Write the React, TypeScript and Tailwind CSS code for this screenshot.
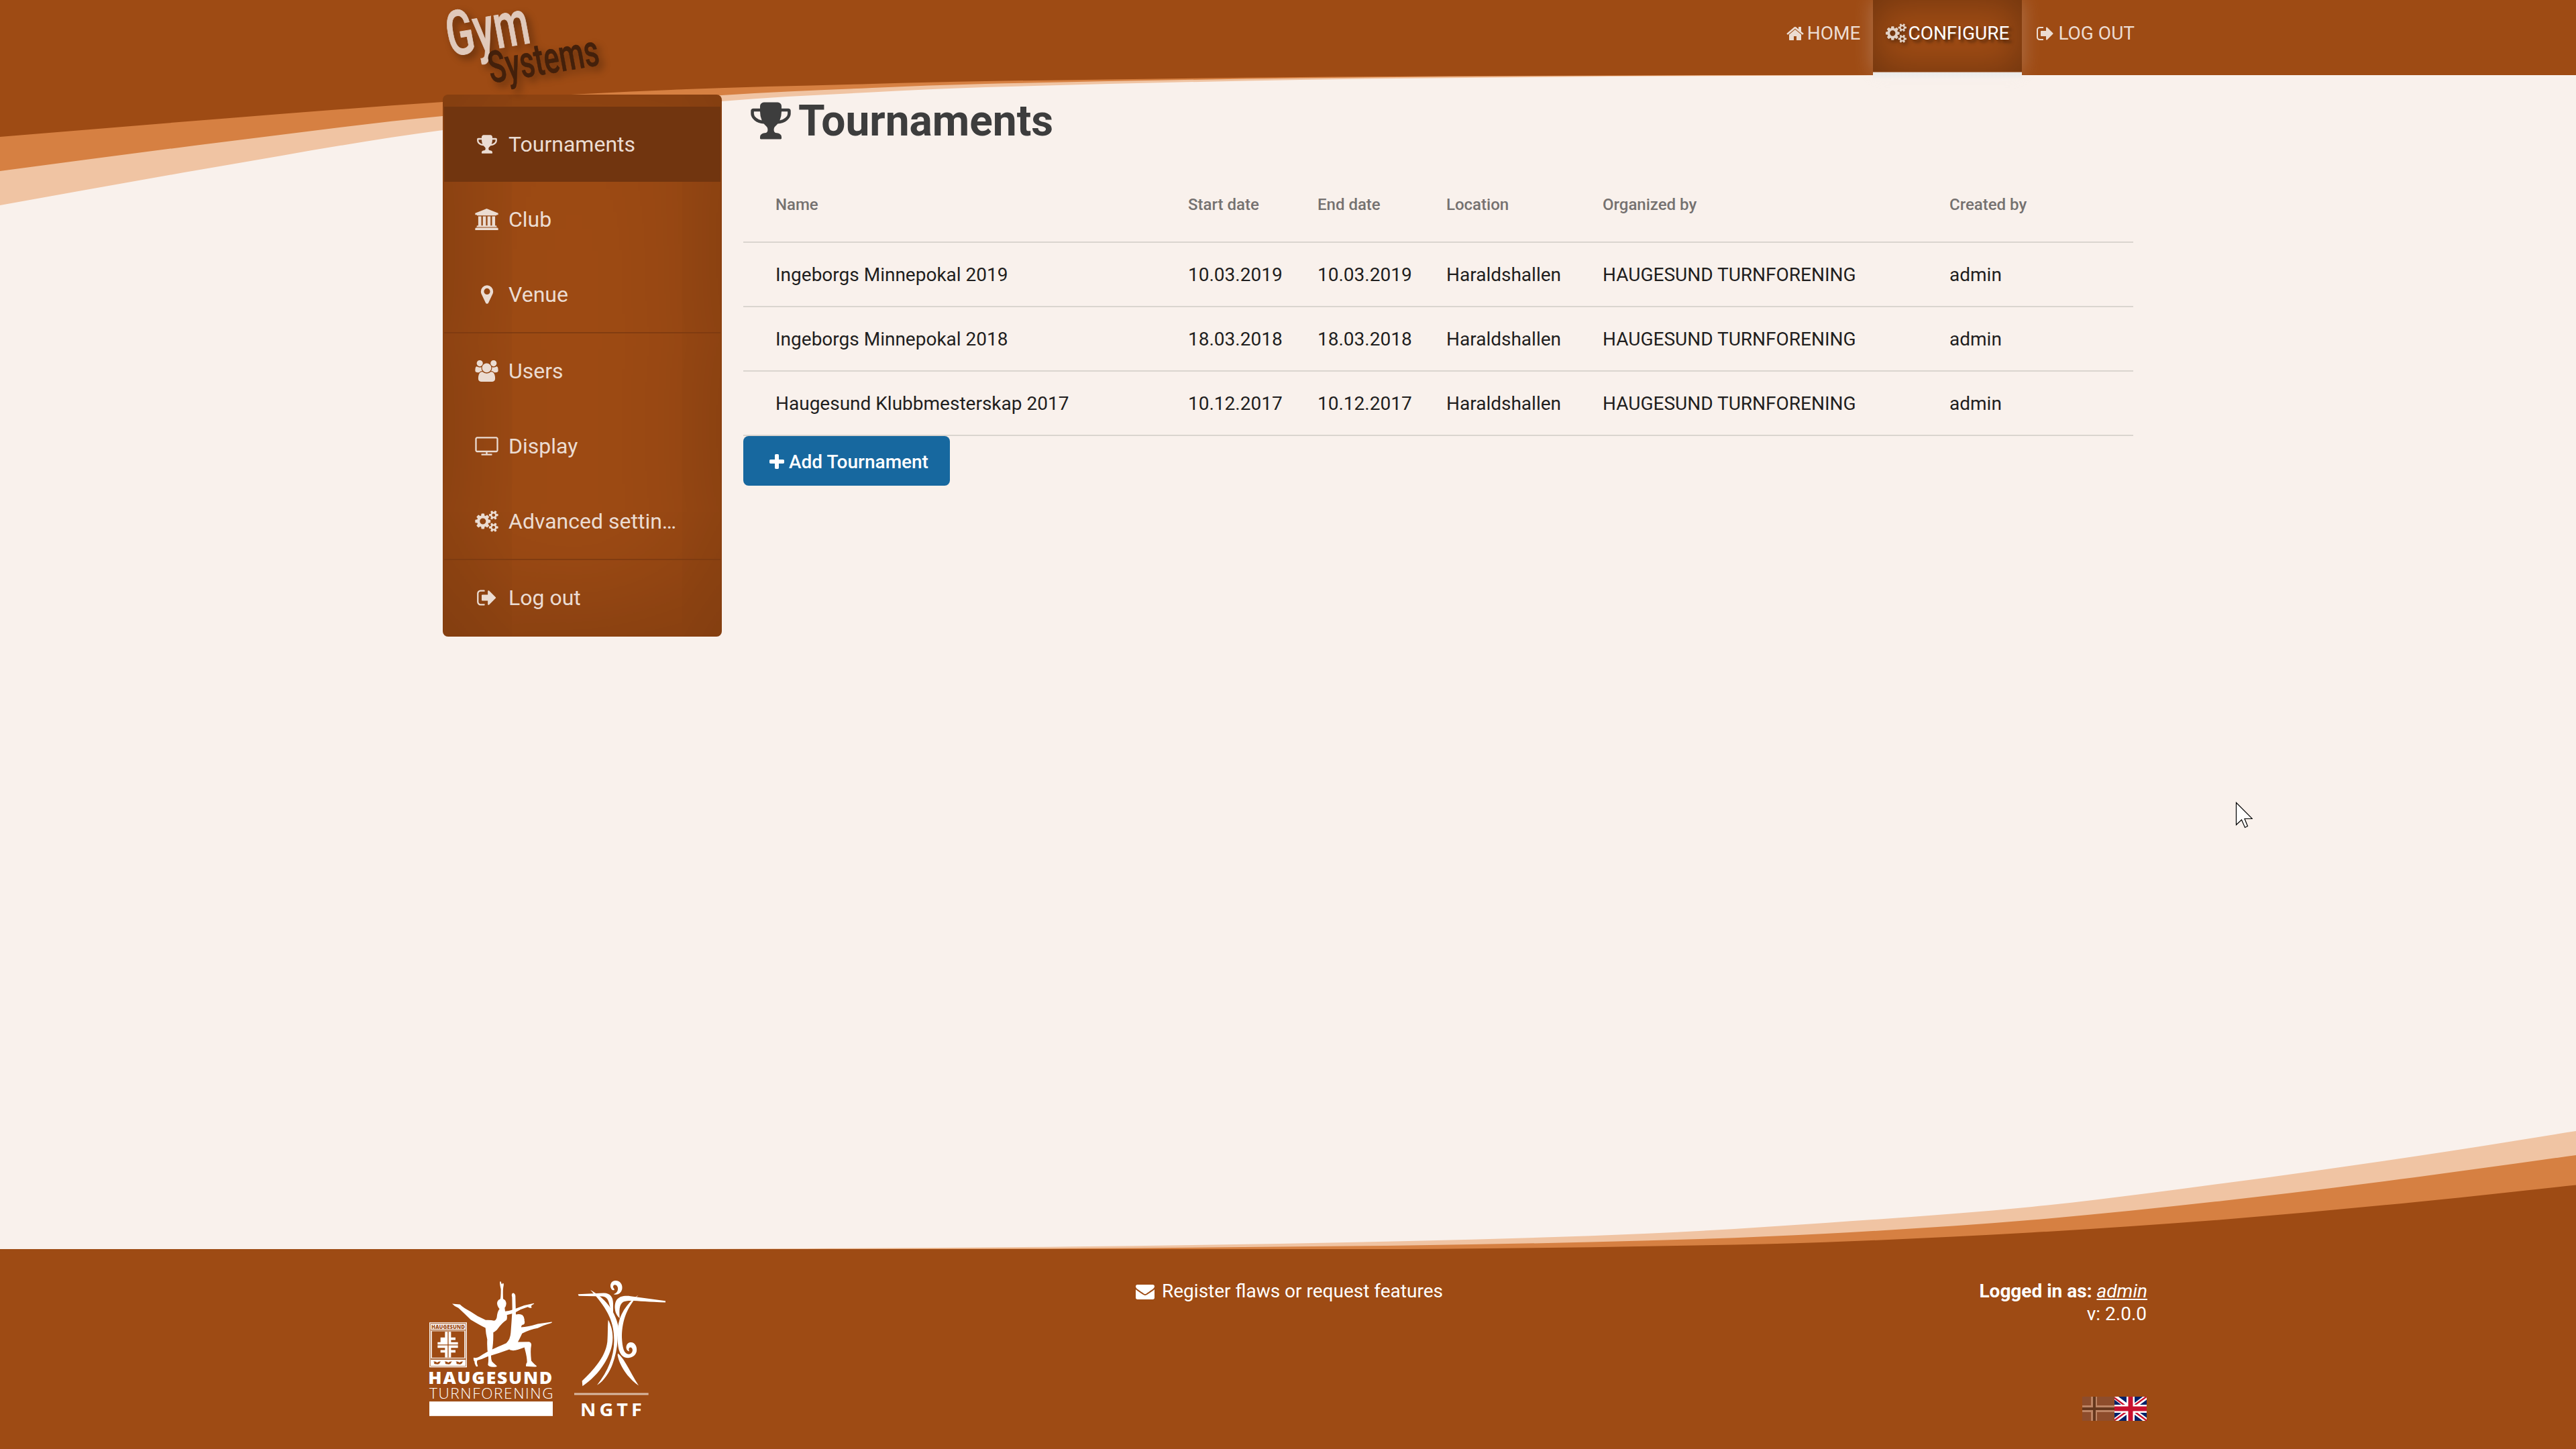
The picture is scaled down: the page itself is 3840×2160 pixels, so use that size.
import React from "react";

type Point = [number, number];

/* Smooth curve through the points; each segment is a Catmull-Rom span. */
function curve(points: Point[]): string {
  let d = "";
  for (let i = 0; i < points.length - 1; i++) {
    const p0 = points[i - 1] ?? points[i];
    const p1 = points[i];
    const p2 = points[i + 1];
    const p3 = points[i + 2] ?? p2;
    const span = p2[0] - p1[0];
    const m1 = (p2[1] - p0[1]) / (p2[0] - p0[0]);
    const m2 = (p3[1] - p1[1]) / (p3[0] - p1[0]);
    d += ` C${p1[0] + span / 3} ${p1[1] + (m1 * span) / 3} ${p2[0] - span / 3} ${p2[1] - (m2 * span) / 3} ${p2[0]} ${p2[1]}`;
  }
  return d;
}

const topWaves: { fill: string; points: Point[] }[] = [
  { fill: "#f0c4a3", points: [[0, 306], [330, 247.5], [660, 194], [1076, 151], [1300, 137.5], [1469, 130], [1939, 119], [2400, 114], [2850, 112]] },
  { fill: "#d68042", points: [[0, 255], [330, 212], [660, 173], [1076, 142], [1300, 131], [1469, 125], [1939, 116.5], [2400, 113], [2800, 112]] },
  { fill: "#9e4b14", points: [[0, 204], [330, 177], [660, 152], [1000, 134], [1300, 125], [1469, 121], [1939, 115], [2400, 112.5], [2600, 112]] },
];

const bottomWaves: { fill: string; points: Point[] }[] = [
  { fill: "#f0c4a3", points: [[1000, 1862], [1600, 1858.3], [2100, 1850], [2457, 1838.7], [2721, 1823], [3029, 1799], [3314, 1764], [3600, 1723.7], [3840, 1686]] },
  { fill: "#d68042", points: [[1200, 1862], [1600, 1861], [2100, 1856.5], [2457, 1849.3], [2721, 1839], [3029, 1818.5], [3314, 1790], [3600, 1755], [3840, 1722]] },
  { fill: "#9e4b14", points: [[1900, 1862], [2143, 1861.7], [2457, 1857.7], [2721, 1851.7], [3029, 1837.3], [3314, 1818], [3600, 1792], [3840, 1766.5]] },
];

const cog =
  "M896 896q0-106-75-181t-181-75-181 75-75 181 75 181 181 75 181-75 75-181zm768 512q0-52-38-90t-90-38-90 38-38 90q0 53 37.5 90.5t90.5 37.5 90.5-37.5 37.5-90.5zm0-1024q0-52-38-90t-90-38-90 38-38 90q0 53 37.5 90.5t90.5 37.5 90.5-37.5 37.5-90.5zm-384 421v185q0 10-7 19.5t-16 10.5l-155 24q-11 35-32 76 34 48 90 115 7 11 7 20 0 12-7 19-23 30-82.5 89.5t-78.5 59.5q-11 0-21-7l-115-90q-37 19-77 31-11 108-23 155-7 24-30 24h-186q-11 0-20-7.5t-10-17.5l-23-153q-34-10-75-31l-118 89q-7 7-20 7-11 0-21-8-144-133-144-160 0-9 7-19 10-14 41-53t47-61q-23-44-35-82l-152-24q-10-1-17-9.5t-7-19.5v-185q0-10 7-19.5t16-10.5l155-24q11-35 32-76-34-48-90-115-7-11-7-20 0-12 7-20 22-30 82-89t79-59q11 0 21 7l115 90q34-18 77-32 11-108 23-154 7-24 30-24h186q11 0 20 7.5t10 17.5l23 153q34 10 75 31l118-89q8-7 20-7 11 0 21 8 144 133 144 160 0 8-7 19-12 16-42 54t-45 60q23 48 34 82l152 23q10 2 17 10.5t7 19.5zm640 533v140q0 16-149 31-12 27-30 52 51 113 51 138 0 4-4 7-122 71-124 71-8 0-46-47t-52-68q-20 2-30 2t-30-2q-14 21-52 68t-46 47q-2 0-124-71-4-3-4-7 0-25 51-138-18-25-30-52-149-15-149-31v-140q0-16 149-31 13-29 30-52-51-113-51-138 0-4 4-7 4-2 35-20t59-34 30-16q8 0 46 46.5t52 67.5q20-2 30-2t30 2q51-71 92-112l6-2q4 0 124 70 4 3 4 7 0 25-51 138 17 23 30 52 149 15 149 31zm0-1024v140q0 16-149 31-12 27-30 52 51 113 51 138 0 4-4 7-122 71-124 71-8 0-46-47t-52-68q-20 2-30 2t-30-2q-14 21-52 68t-46 47q-2 0-124-71-4-3-4-7 0-25 51-138-18-25-30-52-149-15-149-31v-140q0-16 149-31 13-29 30-52-51-113-51-138 0-4 4-7 4-2 35-20t59-34 30-16q8 0 46 46.5t52 67.5q20-2 30-2t30 2q51-71 92-112l6-2q4 0 124 70 4 3 4 7 0 25-51 138 17 23 30 52 149 15 149 31z";

/* Icon outlines on a 1792-unit em; some are wider than the em. */
const icons = {
  trophy: {
    w: 1792,
    d: "M522 883q-74-162-74-371h-256v96q0 78 94.5 162t235.5 113zm1078-275v-96h-256q0 209-74 371 141-29 235.5-113t94.5-162zm128-128v128q0 71-41.5 143t-112 130-173 97.5-215.5 44.5q-42 54-95 95-38 34-52.5 72.5t-14.5 89.5q0 54 30.5 91t97.5 37q75 0 133.5 45.5t58.5 114.5v64q0 14-9 23t-23 9h-832q-14 0-23-9t-9-23v-64q0-69 58.5-114.5t133.5-45.5q67 0 97.5-37t30.5-91q0-51-14.5-89.5t-52.5-72.5q-53-41-95-95-113-5-215.5-44.5t-173-97.5-112-130-41.5-143v-128q0-40 28-68t68-28h288v-96q0-66 47-113t113-47h576q66 0 113 47t47 113v96h288q40 0 68 28t28 68z",
  },
  university: {
    w: 1920,
    d: "M960 0l960 384v128h-128q0 26-20.5 45t-48.5 19H197q-28 0-48.5-19T128 512H0V384zM256 640h256v768h128V640h256v768h128V640h256v768h128V640h256v768h59q28 0 48.5 19t20.5 45v64H128v-64q0-26 20.5-45t48.5-19h59V640zM1851 1600q28 0 48.5 19t20.5 45v128H0v-128q0-26 20.5-45t48.5-19z",
  },
  marker: {
    w: 1792,
    d: "M1152 640q0-106-75-181t-181-75-181 75-75 181 75 181 181 75 181-75 75-181zm256 0q0 109-33 179l-364 774q-16 33-47.5 52t-67.5 19-67.5-19-46.5-52l-365-774q-33-70-33-179 0-212 150-362t362-150 362 150 150 362z",
  },
  users: {
    w: 1920,
    d: "M593 896q-162 5-265 128H194q-82 0-138-40.5T0 865q0-353 124-353 6 0 43.5 21t97.5 42.5T384 597q67 0 133-23-5 37-5 66 0 139 81 256zm1071 637q0 120-73 189.5t-194 69.5H523q-121 0-194-69.5T256 1533q0-53 3.5-103.5t14-109T300 1212t43-97.5 62-81 85.5-53.5T602 960q10 0 43 21.5t73 48 107 48 135 21.5 135-21.5 107-48 73-48 43-21.5q61 0 111.5 20t85.5 53.5 62 81 43 97.5 26.5 108.5 14 109 3.5 103.5zM640 256q0 106-75 181t-181 75-181-75-75-181 75-181T384 0t181 75 75 181zm704 384q0 159-112.5 271.5T960 1024 688.5 911.5 576 640t112.5-271.5T960 256t271.5 112.5T1344 640zm576 225q0 78-56 118.5t-138 40.5h-134q-103-123-265-128 81-117 81-256 0-29-5-66 66 23 133 23 59 0 119-21.5t97.5-42.5 43.5-21q124 0 124 353zm-128-609q0 106-75 181t-181 75-181-75-75-181 75-181 181-75 181 75 75 181z",
  },
  display: {
    w: 1920,
    d: "M1792 1248V288q0-13-9.5-22.5T1760 256H160q-13 0-22.5 9.5T128 288v960q0 13 9.5 22.5t22.5 9.5h1600q13 0 22.5-9.5t9.5-22.5zm128-960v960q0 66-47 113t-113 47h-736v128h352q14 0 23 9t9 23v64q0 14-9 23t-23 9H544q-14 0-23-9t-9-23v-64q0-14 9-23t23-9h352v-128H160q-66 0-113-47T0 1248V288q0-66 47-113t113-47h1600q66 0 113 47t47 113z",
  },
  cogs: { w: 1920, d: cog },
  signOut: {
    w: 1664,
    d: "M640 1440q0 4 1 20t.5 26.5-3 23.5-10 19.5-20.5 6.5h-320q-119 0-203.5-84.5t-84.5-203.5v-704q0-119 84.5-203.5t203.5-84.5h320q13 0 22.5 9.5t9.5 22.5q0 4 1 20t.5 26.5-3 23.5-10 19.5-20.5 6.5h-320q-66 0-113 47t-47 113v704q0 66 47 113t113 47h312l11.5 1 11.5 3 8 5.5 7 9 2 13.5zm928-544q0 26-19 45l-544 544q-19 19-45 19t-45-19-19-45v-288h-448q-26 0-45-19t-19-45v-384q0-26 19-45t45-19h448v-288q0-26 19-45t45-19 45 19l544 544q19 19 19 45z",
  },
  home: {
    w: 1792,
    d: "M1472 992v480q0 26-19 45t-45 19h-384v-384h-256v384h-384q-26 0-45-19t-19-45v-480q0-1 .5-3t.5-3l575-474 575 474q1 2 1 6zm223-69l-62 74q-8 9-21 11h-3q-13 0-21-7l-692-577-692 577q-12 8-24 7-13-2-21-11l-62-74q-8-10-7-23.5t11-21.5l719-599q32-26 76-26t76 26l244 204v-195q0-14 9-23t23-9h192q14 0 23 9t9 23v408l219 182q10 8 11 21.5t-7 23.5z",
  },
  plus: {
    w: 1792,
    d: "M1600 736v192q0 40-28 68t-68 28h-416v416q0 40-28 68t-68 28h-192q-40 0-68-28t-28-68v-416h-416q-40 0-68-28t-28-68v-192q0-40 28-68t68-28h416v-416q0-40 28-68t68-28h192q40 0 68 28t28 68v416h416q40 0 68 28t28 68z",
  },
  envelope: {
    w: 1792,
    d: "M1792 710v794q0 66-47 113t-113 47h-1472q-66 0-113-47t-47-113v-794q44 49 101 87 362 246 497 345 57 42 92.5 65.5t94.5 48 110 24.5h2q51 0 110-24.5t94.5-48 92.5-65.5q170-123 498-345 57-39 100-87zm0-294q0 79-49 151t-122 123q-376 261-468 325-10 7-42.5 31t-54 38.5-52 32.5-57.5 27-50 9h-2q-23 0-50-9t-57.5-27-52-32.5-54-38.5-42.5-31q-91-64-262-182.5t-205-142.5q-62-42-117-115.5t-55-136.5q0-78 41.5-130t118.5-52h1472q65 0 112.5 47t47.5 113z",
  },
};

type IconName = keyof typeof icons;

function Icon({ name, className }: { name: IconName; className: string }) {
  const icon = icons[name];
  return (
    <svg viewBox={`0 0 ${icon.w} 1792`} className={`shrink-0 overflow-visible fill-current ${className}`}>
      <path d={icon.d} />
    </svg>
  );
}

function Waves() {
  return (
    <svg viewBox="0 0 3840 2160" className="absolute inset-0 -z-10 h-[2160px] w-[3840px]">
      {topWaves.map((w) => (
        <path key={w.fill} fill={w.fill} d={`M0 0 L${w.points[0][0]} ${w.points[0][1]}${curve(w.points)} L3840 112 L3840 0Z`} />
      ))}
      {bottomWaves.map((w) => (
        <path key={w.fill} fill={w.fill} d={`M${w.points[0][0]} ${w.points[0][1]}${curve(w.points)} L3840 1870 L${w.points[0][0]} 1870Z`} />
      ))}
    </svg>
  );
}

function Logo() {
  return (
    <svg
      viewBox="650 0 270 150"
      className="h-[150px] w-[270px] shrink-0 overflow-visible font-[Roboto] font-medium [filter:drop-shadow(6px_6px_6px_rgba(0,0,0,0.35))]"
    >
      <g transform="translate(671 84) rotate(-9.5) skewX(1)">
        <text fontSize="93" textLength="124" lengthAdjust="spacingAndGlyphs" fill="#e0c9bb" stroke="#e0c9bb" strokeWidth="1">
          Gym
        </text>
      </g>
      <g transform="translate(732 124) rotate(-9.5) skewX(1)">
        <text fontSize="66" textLength="166" lengthAdjust="spacingAndGlyphs" fill="#43200b" stroke="#43200b" strokeWidth="0.6">
          Systems
        </text>
      </g>
    </svg>
  );
}

function Header() {
  return (
    <header className="flex h-[112px] items-start justify-between pr-[640px] pl-[650px]">
      <Logo />
      <nav className="flex h-[112px] text-[28px] leading-none text-[#ecdcd2]">
        <a className="flex h-[100px] items-center gap-[4px] pr-[19px] pl-[18px]">
          <Icon name="home" className="size-[28px]" />
          HOME
        </a>
        <a className="flex h-[112px] w-[222px] flex-col">
          <span className="flex h-[108px] shrink-0 items-center justify-center gap-[2px] border-b border-[#b98d70] bg-[#9e4b14] pb-[8px] text-white shadow-[inset_0_0_60px_rgba(0,0,0,0.32),0_0_28px_rgba(230,235,240,0.28)] [text-shadow:4px_4px_4px_rgba(0,0,0,0.5)]">
            <Icon name="cogs" className="h-[29px] w-[31px] text-[#e2d2c6] [filter:drop-shadow(3px_3px_3px_rgba(0,0,0,0.4))]" />
            CONFIGURE
          </span>
          <span className="h-[12px] shrink-0 bg-linear-to-b from-[#e9eaea] to-[#f9f1ec]" />
        </a>
        <a className="flex h-[100px] items-center gap-[6px] pr-[18px] pl-[22px]">
          <Icon name="signOut" className="h-[28px] w-[26px]" />
          LOG OUT
        </a>
      </nav>
    </header>
  );
}

const menu: { icon: IconName; iconClass: string; label: string; active?: boolean; divided?: boolean }[] = [
  { icon: "trophy", iconClass: "ml-[1px] size-[32px]", label: "Tournaments", active: true },
  { icon: "university", iconClass: "h-[32px] w-[35px]", label: "Club" },
  { icon: "marker", iconClass: "ml-[1px] size-[32px]", label: "Venue" },
  { icon: "users", iconClass: "ml-[1px] h-[32px] w-[35px]", label: "Users", divided: true },
  { icon: "display", iconClass: "h-[32px] w-[35px]", label: "Display" },
  { icon: "cogs", iconClass: "ml-[1px] h-[32px] w-[35px]", label: "Advanced settin…" },
  { icon: "signOut", iconClass: "ml-[2px] h-[32px] w-[30px]", label: "Log out", divided: true },
];

function Sidebar() {
  return (
    <aside className="h-[808px] w-[416px] shrink-0 rounded-[8px] bg-[#9e4b14] px-[2px] pt-[18px] text-[32px] text-[#ebdcd2] shadow-[inset_0_0_200px_rgba(0,0,0,0.28)]">
      {menu.map((m) => (
        <div key={m.label} className={m.divided ? "border-t-2 border-[#7c3a10]/80" : ""}>
          <a className={`flex h-[112px] items-center pl-[43px] ${m.active ? "bg-[#71350f]" : ""}`}>
            <span className="flex w-[40px] justify-center">
              <Icon name={m.icon} className={m.iconClass} />
            </span>
            <span className="pl-[13px]">{m.label}</span>
          </a>
        </div>
      ))}
    </aside>
  );
}

const rows = [
  ["Ingeborgs Minnepokal 2019", "10.03.2019", "10.03.2019", "Haraldshallen", "HAUGESUND TURNFORENING", "admin"],
  ["Ingeborgs Minnepokal 2018", "18.03.2018", "18.03.2018", "Haraldshallen", "HAUGESUND TURNFORENING", "admin"],
  ["Haugesund Klubbmesterskap 2017", "10.12.2017", "10.12.2017", "Haraldshallen", "HAUGESUND TURNFORENING", "admin"],
];

function Content() {
  return (
    <section className="w-[2072px]">
      <h1 className="flex h-[107px] items-center pb-[29px] pl-[9px] text-[64px] font-bold text-[#3d3d3d]">
        <Icon name="trophy" className="size-[64px]" />
        <span className="pt-[2px] pl-[9px]">Tournaments</span>
      </h1>
      <div className="grid h-[114px] grid-cols-[615px_193px_192px_233px_517px_1fr] items-center border-b-2 border-[#dad5cf] pt-[2px] pl-[48px] text-[24px] font-medium text-[#757170]">
        {["Name", "Start date", "End date", "Location", "Organized by", "Created by"].map((h) => (
          <div key={h}>{h}</div>
        ))}
      </div>
      {rows.map((r) => (
        <div
          key={r[0]}
          className="grid h-[96px] grid-cols-[615px_193px_192px_233px_517px_1fr] items-center border-b-2 border-[#dad5cf] pt-[2px] pl-[48px] text-[28px] text-[#1f1e1e]"
        >
          {r.map((c, i) => (
            <div key={i}>{c}</div>
          ))}
        </div>
      ))}
      <button className="flex h-[74px] w-[308px] items-center rounded-[8px] bg-[#17689f] pt-[3px] pl-[36px] text-[28px] font-medium text-white">
        <Icon name="plus" className="size-[28px]" />
        <span className="pl-[4px]">Add Tournament</span>
      </button>
    </section>
  );
}

function ClubLogo() {
  return (
    <svg viewBox="60 87 552 605" className="h-[202px] w-[184px] overflow-visible fill-white font-['Open_Sans']">
      <path d="M162 190 L197 193 Q210 207 245 225 Q275 247 312 263 Q335 262 350 266 Q362 262 363 240 Q366 222 374 213 Q364 203 363 188 Q364 174 376 170 Q380 168 380 125 Q374 100 376 92 Q379 84 383 101 L385 103 L389 97 Q394 98 392 110 Q388 125 390 168 Q402 172 404 188 Q403 203 397 208 L399 224 Q425 221 450 210 Q490 194 528 188 Q531 190 520 195 Q512 200 518 206 Q516 212 500 204 Q470 212 440 231 L407 240 Q409 256 405 263 Q385 275 362 307 Q352 316 346 318 Q347 370 340 400 Q332 425 340 448 Q350 458 362 468 Q365 473 345 473 Q325 472 322 463 Q326 440 323 420 Q317 390 319 350 Q312 320 311 298 Q285 285 245 261 Q215 232 190 209 Q175 204 162 190Z" />
      <path d="M430 160 Q425 143 436 142 Q446 146 445 160 L447 238 Q462 234 476 240 Q487 250 485 265 Q489 275 483 282 Q470 284 471 295 Q500 294 545 280 L608 271 Q612 275 590 281 Q565 288 545 299 Q510 305 475 323 Q465 345 456 361 L505 360 Q517 363 516 375 Q511 400 516 445 Q528 460 540 468 Q541 472 530 472 L492 470 Q491 460 497 452 Q497 430 489 400 L485 385 Q455 397 435 399 Q420 398 418 394 Q370 412 320 426 Q295 438 275 443 Q270 452 277 468 Q274 473 269 470 Q262 458 262 448 Q256 442 258 431 Q270 434 283 427 Q320 402 355 388 Q385 374 404 366 Q422 350 424 320 Q428 270 431 215Z" />
      <path fillRule="evenodd" d="M60 273H228V474H60ZM64 277V470H224V277Z" />
      <rect x="66" y="280" width="156" height="26" />
      <text x="69" y="302" fontSize="26" fontWeight="800" textLength="150" lengthAdjust="spacingAndGlyphs" fill="#9e4b14">
        HAUGESUND
      </text>
      <path fillRule="evenodd" d="M66 309H222V435H66ZM72 313V431H216V313Z" opacity="0.8" />
      <path d="M130 315H142V372H97V362H110V352H110V341H130ZM146 315H157V341H177V352H157V362H188V372H146ZM97 376H142V430H130V408H110V397H130V387H97ZM146 376H188V387H157V397H177V408H157V430H146Z" />
      <rect x="66" y="440" width="156" height="28" />
      <path
        fill="#9e4b14"
        d="M78 449Q88 446 95 453Q102 446 112 449Q106 452 106 456Q100 462 92 460Q84 461 80 457Q86 456 78 449ZM128 449Q138 446 145 453Q152 446 162 449Q156 452 156 456Q150 462 142 460Q134 461 130 457Q136 456 128 449ZM178 449Q188 446 195 453Q202 446 212 449Q206 452 206 456Q200 462 192 460Q184 461 180 457Q186 456 178 449Z"
      />
      <text x="55" y="548" fontSize="75" fontWeight="800" textLength="560" lengthAdjust="spacingAndGlyphs" letterSpacing="5">
        HAUGESUND
      </text>
      <text x="60" y="614" fontSize="68" fontWeight="300" textLength="554" lengthAdjust="spacing">
        TURNFORENING
      </text>
      <rect x="60" y="627" width="552" height="65" />
    </svg>
  );
}

function FederationLogo() {
  return (
    <svg viewBox="708 87 408 605" className="h-[202px] w-[136px] overflow-visible fill-white font-['Open_Sans']">
      <path d="M888 87C912 84 926 104 922 125C917 145 900 153 884 147C898 143 905 132 903 118C900 103 882 100 882 114C882 121 890 122 887 129C878 132 870 122 870 110C870 97 878 88 888 87Z" />
      <path d="M725 147L840 142C870 143 882 160 882 190L882 235C860 210 872 162 835 157L728 155Z" />
      <path d="M780 128C845 165 890 220 905 290L902 350C897 440 862 522 810 554C860 490 888 420 886 350C886 280 865 220 780 128Z" />
      <path d="M995 150C935 215 921 280 921 340C923 385 930 415 952 416C972 413 973 388 961 385C952 384 950 396 955 402C937 402 935 370 955 363C980 358 990 383 987 402C981 428 955 436 935 430C915 422 902 400 902 340L903 300C908 240 940 190 995 150Z" />
      <path d="M1116 177L960 156C905 150 888 172 890 212C892 235 903 248 911 254C910 225 907 195 927 182C950 170 1010 182 1116 184Z" />
      <path d="M860 262C886 310 884 360 870 400C845 470 795 525 745 558L743 535C800 480 848 425 856 360C859 320 857 290 860 262Z" />
      <path d="M903 412C930 430 960 500 996 556C945 520 910 465 902 420Z" />
      <rect x="708" y="589" width="332" height="9" opacity="0.6" />
      <text x="735" y="692" fontSize="81" fontWeight="700" textLength="290" lengthAdjust="spacingAndGlyphs" letterSpacing="14">
        NGTF
      </text>
    </svg>
  );
}

function Flags() {
  return (
    <div className="flex">
      <svg viewBox="0 0 48 36" className="h-[36px] w-[48px]">
        <rect width="48" height="36" fill="#8e4d2c" />
        <path fill="#bd8464" d="M13 0h9v13h26v10H22v13h-9V23H0V13h13z" />
        <path fill="#65371d" d="M16 0h4v16h28v4H20v16h-4V20H0v-4h16z" />
      </svg>
      <svg viewBox="0 0 48 36" className="h-[36px] w-[48px]">
        <rect width="48" height="36" fill="#012169" />
        <path stroke="#fff" strokeWidth="7" d="M0 0L48 36M48 0L0 36" />
        <path stroke="#c8102e" strokeWidth="2.4" d="M-1 1L24 19.5M24 18L49 36.5M49 -1L24 17M24 18L-1 36" />
        <path stroke="#fff" strokeWidth="12" d="M24 0V36M0 18H48" />
        <path stroke="#c8102e" strokeWidth="7" d="M24 0V36M0 18H48" />
      </svg>
    </div>
  );
}

function Footer() {
  return (
    <footer className="flex h-[298px] items-start justify-between bg-[#9e4b14] pr-[640px] pl-[640px] text-[28px] leading-[34px] text-white">
      <div className="flex w-[1053px] gap-[32px] pt-[47px]">
        <ClubLogo />
        <FederationLogo />
      </div>
      <a className="flex flex-1 items-center gap-[11px] pt-[46px]">
        <Icon name="envelope" className="size-[28px]" />
        Register flaws or request features
      </a>
      <div className="flex flex-col items-end pt-[46px]">
        <div className="-mr-[1px]">
          <b>Logged in as:</b> <i className="underline">admin</i>
        </div>
        <div>v: 2.0.0</div>
        <div className="mt-[106px]">
          <Flags />
        </div>
      </div>
    </footer>
  );
}

export default function App() {
  return (
    <div className="relative isolate flex h-[2160px] w-[3840px] flex-col overflow-hidden bg-[#f9f1ec] font-[Roboto,sans-serif]">
      <Waves />
      <Header />
      <main className="flex flex-1 gap-[32px] pt-[29px] pl-[660px]">
        <Sidebar />
        <Content />
      </main>
      <Footer />
      <svg viewBox="0 0 26 40" className="absolute top-[1195px] left-[3332px] h-[40px] w-[26px]">
        <path d="M1.5 1.5V34.5L9.5 27L14.5 38.5L18.5 36.5L14 25.5H25.5Z" fill="#fff" stroke="#000" strokeWidth="1.2" />
      </svg>
    </div>
  );
}
